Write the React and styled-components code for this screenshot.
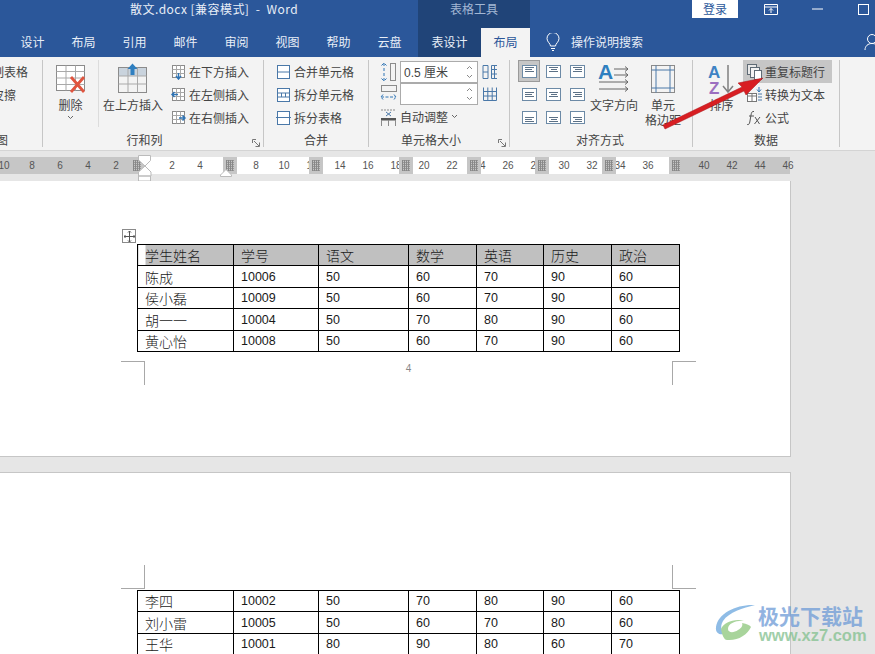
import React from 'react';
import styled, { createGlobalStyle } from 'styled-components';

const GlobalStyle = createGlobalStyle`
  html, body {
    margin: 0;
    padding: 0;
    background: #e6e6e6;
  }
  body {
    font-family: "Noto Sans CJK SC", "Liberation Sans", sans-serif;
    font-size: 12px;
    color: #444;
  }
`;

const Window = styled.div`
  position: relative;
  width: 875px;
  height: 654px;
  overflow: hidden;
  background: #e6e6e6;
`;

/* title bar */
const TitleBar = styled.div`
  display: flex;
  height: 28px;
  background: #2b579a;
  color: #e8eef7;
  & > * {
    flex-shrink: 0;
  }
`;

const DocTitle = styled.div`
  width: 418px;
  box-sizing: border-box;
  padding-left: 130px;
  line-height: 18px;
  font-size: 12px;
  letter-spacing: 0.45px;
  white-space: pre;
`;

const ContextTitle = styled.div`
  width: 112px;
  margin-right: 162px;
  background: #204478;
  color: #a3b7d4;
  text-align: center;
  line-height: 18px;
`;

const LoginButton = styled.div`
  width: 46px;
  height: 18px;
  background: #fff;
  color: #2b579a;
  text-align: center;
  line-height: 17px;
`;

const WindowControl = styled.div`
  width: 46px;
  height: 18px;
  display: flex;
  align-items: center;
  justify-content: center;
  margin-left: ${(p) => p.$gap || 0}px;
`;

/* tabs */
const TabBar = styled.div`
  display: flex;
  height: 29px;
  padding-left: 7px;
  background: #2b579a;
  & > * {
    flex-shrink: 0;
  }
`;

const Tab = styled.div`
  width: ${(p) => p.$w || 51}px;
  line-height: 27px;
  text-align: center;
  color: ${(p) => (p.$active ? '#2b579a' : '#e8eef7')};
  background: ${(p) => (p.$active ? '#f3f3f3' : p.$context ? '#204478' : 'transparent')};
`;

const TabGap = styled.div`
  width: 3px;
`;

const SearchHint = styled.div`
  display: flex;
  align-items: center;
  gap: 11px;
  height: 27px;
  margin-left: 16px;
  color: #e8eef7;
  white-space: nowrap;
`;

const UserIcon = styled.div`
  margin-left: 221px;
  padding-top: 5px;
`;

/* ribbon */
const Ribbon = styled.div`
  display: flex;
  height: 94px;
  padding-top: 3px;
  box-sizing: border-box;
  background: #f3f3f3;
  border-bottom: 1px solid #d4d4d4;
`;

const Group = styled.div`
  position: relative;
  width: ${(p) => p.$w}px;
  height: 87px;
  box-sizing: border-box;
  border-right: 1px solid #c6c6c6;
  display: flex;
  flex-direction: column;
  overflow: hidden;
`;

const GroupBody = styled.div`
  display: flex;
  height: 71px;
  padding-left: ${(p) => p.$pad || 0}px;
`;

const GroupLabel = styled.div`
  height: 16px;
  text-align: center;
  line-height: 18px;
  color: #444;
  margin-left: ${(p) => p.$shift || 0}px;
  white-space: nowrap;
`;

const Launcher = styled.div`
  position: absolute;
  right: 3px;
  bottom: 0;
  width: 8px;
  height: 8px;
  line-height: 0;
`;

const ClippedGroupBody = styled.div`
  height: 71px;
  display: flex;
  flex-direction: column;
  align-items: flex-end;
`;

const ClippedRow = styled.div`
  height: 23px;
  line-height: 23px;
  white-space: nowrap;
  margin-right: ${(p) => p.$right}px;
`;

const ClippedLabel = styled.div`
  height: 16px;
  line-height: 18px;
  display: flex;
  justify-content: flex-end;
  margin-right: 34px;
  white-space: nowrap;
`;

const BigButton = styled.div`
  width: ${(p) => p.$w}px;
  margin-left: ${(p) => p.$ml || 0}px;
  display: flex;
  flex-direction: column;
  align-items: center;
  padding-top: 2px;
  line-height: 15px;
  text-align: center;
  flex-shrink: 0;
  border-right: ${(p) => (p.$divided ? '1px solid #dcdcdc' : 'none')};
  height: ${(p) => (p.$divided ? '67px' : 'auto')};
  box-sizing: border-box;
`;

const BigIcon = styled.div`
  height: 34px;
  flex-shrink: 0;
  display: flex;
  align-items: center;
  margin-bottom: 1px;
`;

const Chevron = styled.div`
  height: 12px;
  margin-top: 3px;
  line-height: 0;
`;

const SmallColumn = styled.div`
  margin-left: ${(p) => p.$ml || 0}px;
  display: flex;
  flex-direction: column;
`;

const SmallRow = styled.div`
  display: flex;
  align-items: center;
  gap: 3px;
  height: 23px;
  padding: 0 7px 0 ${(p) => p.$pad || 0}px;
  white-space: nowrap;
  background: ${(p) => (p.$hot ? '#c6c6c6' : 'transparent')};
`;

const SizeColumn = styled.div`
  display: flex;
  flex-direction: column;
`;

const SizeRow = styled.div`
  display: flex;
  align-items: center;
  height: ${(p) => p.$h || 23}px;
  gap: 3px;
`;

const SpinInput = styled.div`
  width: 78px;
  height: 22px;
  box-sizing: border-box;
  border: 1px solid #ababab;
  background: #fff;
  display: flex;
  align-items: center;
  justify-content: space-between;
  padding: 0 3px 0 3px;
  margin-right: 1px;
  font-family: "Liberation Sans", "Noto Sans CJK SC", sans-serif;
  font-size: 12px;
`;

const AlignGrid = styled.div`
  display: grid;
  grid-template-columns: repeat(3, 22px);
  grid-auto-rows: 23px;
  column-gap: 2px;
  margin-left: 8px;
`;

const AlignCell = styled.div`
  display: flex;
  align-items: center;
  justify-content: center;
  height: ${(p) => (p.$on ? '22px' : '23px')};
  box-sizing: border-box;
  background: ${(p) => (p.$on ? '#c6c6c6' : 'transparent')};
  border: ${(p) => (p.$on ? '1px solid #9a9a9a' : 'none')};
`;

/* ruler */
const RulerBand = styled.div`
  position: relative;
  height: 30px;
  background: #e6e6e6;
`;

const RulerTrack = styled.div`
  position: absolute;
  top: 6px;
  left: 0;
  width: 790px;
  height: 17px;
  background: linear-gradient(
    90deg,
    #c6c6c6 145px,
    #fff 145px,
    #fff 670px,
    #c6c6c6 670px
  );
  display: flex;
`;

const RulerCell = styled.div`
  flex: 0 0 28px;
  text-align: center;
  font-family: "Liberation Sans", sans-serif;
  font-size: 10px;
  line-height: 17px;
  color: #555;
  &:first-child {
    margin-left: -10px;
  }
`;

const ColumnMarker = styled.div`
  position: absolute;
  top: 6px;
  left: ${(p) => p.$x - 7}px;
  width: 14px;
  height: 17px;
  padding: 3px 3px;
  box-sizing: border-box;
  background: #c6c6c6;
  &::after {
    content: '';
    display: block;
    height: 100%;
    background:
      repeating-linear-gradient(90deg, #888 0 1px, transparent 1px 2px),
      repeating-linear-gradient(0deg, #999 0 1px, #c6c6c6 1px 2px);
  }
`;

const RulerHandle = styled.svg`
  position: absolute;
  top: 4px;
  left: 138px;
`;

const HangingHandle = styled.svg`
  position: absolute;
  top: 18px;
  left: 220px;
`;

/* pages */
const DocArea = styled.div`
  width: 791px;
`;

const Page = styled.div`
  position: relative;
  height: ${(p) => p.$h}px;
  box-sizing: border-box;
  background: #fff;
  padding-top: ${(p) => p.$top}px;
  border-right: 1px solid #c6c6c6;
  border-top: ${(p) => (p.$second ? '1px solid #c6c6c6' : 'none')};
  border-bottom: ${(p) => (p.$second ? 'none' : '1px solid #c6c6c6')};
`;

const PageGap = styled.div`
  height: 15px;
  background: #e6e6e6;
`;

const MoveHandle = styled.div`
  width: 14px;
  height: 14px;
  margin: 0 0 1px 122px;
  box-sizing: border-box;
  border: 1px solid #8a8a8a;
  background: #fff;
  display: flex;
  align-items: center;
  justify-content: center;
`;

const WordTable = styled.table`
  margin-left: 137px;
  margin-top: ${(p) => p.$mt || 0}px;
  border-collapse: collapse;
  table-layout: fixed;
  width: 542px;
  color: #000;
`;

const TableRow = styled.tr`
  height: 21px;
  &:nth-child(even) {
    height: 22px;
  }
`;

const Cell = styled.td`
  padding: 0 0 0 7px;
  border: 1px solid #000;
  box-sizing: border-box;
  overflow: hidden;
  white-space: nowrap;
  vertical-align: middle;
  font-family: ${(p) =>
    p.$cjk ? '"Noto Sans CJK SC", sans-serif' : '"Liberation Sans", sans-serif'};
  font-size: ${(p) => (p.$cjk ? 14 : 12.5)}px;
  line-height: 20px;
  font-weight: 300;
  color: #1a1a1a;
  background: ${(p) =>
    p.$inset
      ? 'linear-gradient(90deg, #fff 7px, #c0c0c0 7px)'
      : p.$head
        ? '#c0c0c0'
        : '#fff'};
`;

const CropRow = styled.div`
  display: flex;
  justify-content: space-between;
  width: 575px;
  margin-left: 121px;
  margin-top: ${(p) => p.$mt || 0}px;
`;

const CropMark = styled.div`
  width: 24px;
  height: 24px;
  box-sizing: border-box;
  ${(p) => (p.$top ? 'border-bottom' : 'border-top')}: 1px solid #a8a8a8;
  ${(p) => (p.$side === 'left' ? 'border-right' : 'border-left')}: 1px solid #a8a8a8;
`;

const PageNumber = styled.div`
  font-family: "Liberation Sans", sans-serif;
  font-size: 10px;
  line-height: 16px;
  color: #888;
  align-self: flex-start;
`;

/* overlays */
const ArrowOverlay = styled.svg`
  position: absolute;
  left: 0;
  top: 0;
  pointer-events: none;
`;

const Watermark = styled.div`
  position: absolute;
  left: 715px;
  top: 603px;
  display: flex;
  gap: 1px;
  opacity: 0.75;
`;

const WatermarkText = styled.div`
  display: flex;
  flex-direction: column;
`;

const WatermarkName = styled.div`
  font-size: 21px;
  line-height: 24px;
  font-weight: 700;
  color: #6d9ad6;
  white-space: nowrap;
`;

const WatermarkUrl = styled.div`
  font-family: "Liberation Sans", sans-serif;
  font-size: 16.5px;
  line-height: 17px;
  font-weight: 700;
  color: #82c08e;
  margin-left: 1px;
`;

/* icon drawings */
const BLUE = '#4a78a8';

const TableGlyph = ({ kind }) => (
  <svg width="15" height="16" viewBox="0 0 15 16" fill="none" stroke={BLUE}>
    <rect x="1.5" y="1.5" width="12" height="13" fill="#fff" />
    {kind === 'merge' && <path d="M1.5 8h12" />}
    {kind === 'split' && <path d="M1.5 6h12M1.5 10h12M5.5 6v4M9.5 6v4" />}
    {kind === 'table' && <path d="M0 7.500h15" />}
  </svg>
);

const InsertGlyph = ({ dir }) => (
  <svg width="15" height="16" viewBox="0 0 15 16" fill="none">
    <rect x="1.5" y="1.5" width="12" height="12" fill="#fff" stroke="#8b8b8b" />
    <path d="M5.5 1.5v12M9.5 1.5v12M1.5 5.5h12M1.5 9.5h12" stroke="#a8a8a8" />
    {dir === 'down' && <path d="M7.5 9v5.5M5 12l2.5 3L10 12" stroke="#2f74b5" strokeWidth="1.5" />}
    {dir === 'left' && <path d="M1 7.5h6M3.5 5L1 7.5 3.5 10" stroke="#2f74b5" strokeWidth="1.5" />}
    {dir === 'right' && <path d="M8 8h6M11.5 5.5L14 8l-2.5 2.5" stroke="#2f74b5" strokeWidth="1.5" />}
  </svg>
);

const AlignGlyph = ({ h, v }) => {
  const ys = v === 0 ? [2.5, 4.5, 6.5] : v === 1 ? [4.5, 6.5, 8.5] : [6.5, 8.5, 10.5];
  const spans = [
    [3, 12],
    h === 0 ? [3, 10] : h === 1 ? [5, 11] : [5, 12],
    [3, 12],
  ];
  return (
    <svg width="15" height="13" viewBox="0 0 15 13" fill="none">
      <rect x="0.5" y="0.5" width="14" height="12" fill="#fff" stroke="#6c8aa6" />
      {ys.map((y, i) => (
        <path key={y} d={`M${spans[i][0]} ${y}H${spans[i][1]}`} stroke="#5c7186" />
      ))}
    </svg>
  );
};

const Corner = () => (
  <svg width="8" height="8" viewBox="0 0 8 8" fill="none" stroke="#777">
    <path d="M0.5 4V0.5H4M2 2l5 5M3.5 7.5h4v-4" />
  </svg>
);

const ChevronDown = () => (
  <svg width="7" height="5" viewBox="0 0 7 5" fill="none" stroke="#666">
    <path d="M1 1l2.5 2.5L6 1" />
  </svg>
);

const SpinArrows = () => (
  <svg width="9" height="18" viewBox="0 0 9 18" fill="none" stroke="#888">
    <path d="M2 6l2.500-2.500L7 6M2 12l2.500 2.500L7 12" />
  </svg>
);

const tabs = ['设计', '布局', '引用', '邮件', '审阅', '视图', '帮助', '云盘'];
const headRow = ['学生姓名', '学号', '语文', '数学', '英语', '历史', '政治'];
const firstTable = [
  ['陈成', '10006', '50', '60', '70', '90', '60'],
  ['侯小磊', '10009', '50', '60', '70', '90', '60'],
  ['胡一一', '10004', '50', '70', '80', '90', '60'],
  ['黄心怡', '10008', '50', '60', '70', '90', '60'],
];
const secondTable = [
  ['李四', '10002', '50', '70', '80', '90', '60'],
  ['刘小雷', '10005', '50', '60', '70', '80', '60'],
  ['王华', '10001', '80', '90', '80', '60', '70'],
];
const colWidths = [96, 85, 90, 68, 67, 68, 68];
const markers = [137, 230, 316, 406, 474, 542, 609, 676];
const rulerValues = Array.from({ length: 29 }, (_, k) => Math.abs(10 - 2 * k));

const DataTable = ({ rows, head, mt }) => (
  <WordTable $mt={mt}>
    <colgroup>
      {colWidths.map((w, i) => (
        <col key={i} style={{ width: w }} />
      ))}
    </colgroup>
    <tbody>
      {head && (
        <TableRow>
          {head.map((t, i) => (
            <Cell key={t} $cjk $head $inset={i === 0}>{t}</Cell>
          ))}
        </TableRow>
      )}
      {rows.map((row) => (
        <TableRow key={row[0]}>
          {row.map((t, i) => (
            <Cell key={i} $cjk={i === 0}>{t}</Cell>
          ))}
        </TableRow>
      ))}
    </tbody>
  </WordTable>
);

const App = () => (
  <Window>
    <GlobalStyle />
    <TitleBar>
      <DocTitle>散文.docx [兼容模式]  -  Word</DocTitle>
      <ContextTitle>表格工具</ContextTitle>
      <LoginButton>登录</LoginButton>
      <WindowControl $gap={10}>
        <svg width="14" height="11" viewBox="0 0 14 11" fill="none" stroke="#fff">
          <path d="M0.5 0.5h13v10h-13zM0.5 3h13M7 9V4.5M5 6.5l2-2 2 2" />
        </svg>
      </WindowControl>
      <WindowControl>
        <svg width="11" height="2" viewBox="0 0 11 2"><path d="M0 1h11" stroke="#fff" /></svg>
      </WindowControl>
      <WindowControl>
        <svg width="11" height="11" viewBox="0 0 11 11" fill="none"><rect x="0.5" y="0.5" width="10" height="10" stroke="#fff" /></svg>
      </WindowControl>
    </TitleBar>

    <TabBar>
      {tabs.map((t) => (
        <Tab key={t}>{t}</Tab>
      ))}
      <TabGap />
      <Tab $w={63} $context>表设计</Tab>
      <Tab $w={49} $active>布局</Tab>
      <SearchHint>
        <svg width="14" height="18" viewBox="0 0 14 18" fill="none" stroke="#fff">
          <path d="M4.5 13c0-2.5-3.5-4-3.5-7.5a6 6 0 0 1 12 0C13 9 9.5 10.500 9.500 13zM5 15.500h4M6 17.500h2" />
        </svg>
        操作说明搜索
      </SearchHint>
      <UserIcon>
        <svg width="16" height="18" viewBox="0 0 16 18" fill="none" stroke="#fff">
          <circle cx="8" cy="6" r="4.500" />
          <path d="M1 17c0-4 3-6.500 7-6.500s7 2.500 7 6.500" />
        </svg>
      </UserIcon>
    </TabBar>

    <Ribbon>
      <Group $w={43}>
        <ClippedGroupBody>
          <ClippedRow $right={14}>绘制表格</ClippedRow>
          <ClippedRow $right={26}>橡皮擦</ClippedRow>
        </ClippedGroupBody>
        <ClippedLabel>绘图</ClippedLabel>
      </Group>

      <Group $w={221}>
        <GroupBody>
          <BigButton $w={56} $divided>
            <BigIcon>
              <svg width="32" height="30" viewBox="0 0 32 30" fill="none">
                <rect x="1.500" y="1.500" width="28" height="25" fill="#fff" stroke="#8b8b8b" />
                <path d="M11 1.500v25M20.500 1.500v25M1.500 7.500h28M1.500 14h28M1.500 20.500h28" stroke="#a9a9a9" />
                <path d="M16 13l13 15M29 13L16 28" stroke="#e0553f" strokeWidth="2.800" />
              </svg>
            </BigIcon>
            删除
            <Chevron><ChevronDown /></Chevron>
          </BigButton>
          <BigButton $w={60} $ml={4}>
            <BigIcon>
              <svg width="30" height="32" viewBox="0 0 30 32" fill="none">
                <rect x="1" y="5" width="28" height="8" fill="#c9d3dd" />
                <rect x="0.500" y="4.500" width="28" height="25" stroke="#8b8b8b" />
                <path d="M10 4.500v25M19.500 4.500v25M0.500 13h28M0.500 21h28" stroke="#a9a9a9" />
                <path d="M14.500 0.500L9.500 6h3v6h4V6h3z" fill="#2f7fc0" />
              </svg>
            </BigIcon>
            在上方插入
          </BigButton>
          <SmallColumn $ml={8}>
            <SmallRow><InsertGlyph dir="down" />在下方插入</SmallRow>
            <SmallRow><InsertGlyph dir="left" />在左侧插入</SmallRow>
            <SmallRow><InsertGlyph dir="right" />在右侧插入</SmallRow>
          </SmallColumn>
        </GroupBody>
        <GroupLabel $shift={-17}>行和列</GroupLabel>
        <Launcher><Corner /></Launcher>
      </Group>

      <Group $w={105}>
        <GroupBody $pad={12}>
          <SmallColumn>
            <SmallRow><TableGlyph kind="merge" />合并单元格</SmallRow>
            <SmallRow><TableGlyph kind="split" />拆分单元格</SmallRow>
            <SmallRow><TableGlyph kind="table" />拆分表格</SmallRow>
          </SmallColumn>
        </GroupBody>
        <GroupLabel>合并</GroupLabel>
      </Group>

      <Group $w={141}>
        <GroupBody $pad={11}>
          <SizeColumn>
            <SizeRow>
              <svg width="17" height="20" viewBox="0 0 17 20" fill="none">
                <rect x="10.500" y="1.500" width="5" height="17" stroke="#8b8b8b" />
                <path d="M4 1v18M1.500 3.500L4 1l2.500 2.500M1.500 16.500L4 19l2.500-2.500" stroke="#2f74b5" strokeDasharray="3 2" />
              </svg>
              <SpinInput>0.5 厘米<SpinArrows /></SpinInput>
              <svg width="16" height="16" viewBox="0 0 16 16" fill="none" stroke={BLUE}>
                <path d="M1 1.500h5v13H1zM1 8h5M15 1.500H9.500v13H15M9.500 5.500H15M9.500 10H15M12.500 1.500v13" />
              </svg>
            </SizeRow>
            <SizeRow $h={22}>
              <svg width="17" height="20" viewBox="0 0 17 20" fill="none">
                <rect x="1.500" y="1.500" width="15" height="6" stroke="#8b8b8b" />
                <path d="M1 13h15M3 10.500L1 13l2 2.500M14 10.500l2 2.500-2 2.500" stroke="#2f74b5" strokeDasharray="3 1.500" />
              </svg>
              <SpinInput><span /><SpinArrows /></SpinInput>
              <svg width="16" height="16" viewBox="0 0 16 16" fill="none" stroke={BLUE}>
                <path d="M1.500 1.500v13h13v-13M1.500 5.500h13M1.500 10h13M5.800 1.500v13M10.200 1.500v13" />
              </svg>
            </SizeRow>
            <SizeRow>
              <svg width="17" height="18" viewBox="0 0 17 18" fill="none">
                <path d="M1 2h15" stroke="#8b8b8b" strokeDasharray="2 1" />
                <path d="M6 4l5 4M11 4L6 8" stroke={BLUE} />
                <rect x="1" y="10" width="15" height="2.500" fill="#555" />
                <path d="M1.500 12v6M8.500 12v6M15.500 12v6" stroke="#8b8b8b" />
              </svg>
              自动调整 <ChevronDown />
            </SizeRow>
          </SizeColumn>
        </GroupBody>
        <GroupLabel $shift={-16}>单元格大小</GroupLabel>
        <Launcher><Corner /></Launcher>
      </Group>

      <Group $w={183}>
        <GroupBody>
          <AlignGrid>
            {[0, 1, 2].map((v) =>
              [0, 1, 2].map((h) => (
                <AlignCell key={`${v}${h}`} $on={v === 0 && h === 0}>
                  <AlignGlyph h={h} v={v} />
                </AlignCell>
              ))
            )}
          </AlignGrid>
          <BigButton $w={52}>
            <BigIcon>
              <svg width="32" height="32" viewBox="0 0 32 32" fill="none">
                <text x="0" y="16" fontFamily="Liberation Sans" fontSize="21" fontWeight="700" fill="#2f7fc0">A</text>
                <path d="M16 6h14M27 3.500L30 6l-3 2.500M16 12h14M27 9.500l3 2.500-3 2.500M1 19h29M27 16.500l3 2.500-3 2.500M1 26h29M27 23.500l3 2.500-3 2.500" stroke="#666" />
              </svg>
            </BigIcon>
            文字方向
          </BigButton>
          <BigButton $w={46}>
            <BigIcon>
              <svg width="24" height="30" viewBox="0 0 24 30" fill="none">
                <rect x="0.500" y="1.500" width="23" height="27" stroke="#8b8b8b" />
                <path d="M5 1.500v27M19 1.500v27" stroke={BLUE} />
                <path d="M0.500 6h23M0.500 24h23" stroke={BLUE} />
              </svg>
            </BigIcon>
            单元<br />格边距
          </BigButton>
        </GroupBody>
        <GroupLabel $shift={-2}>对齐方式</GroupLabel>
      </Group>

      <Group $w={147}>
        <GroupBody $pad={7}>
          <BigButton $w={43}>
            <BigIcon>
              <svg width="28" height="32" viewBox="0 0 28 32" fill="none">
                <text x="0" y="15" fontFamily="Liberation Sans" fontSize="17" fontWeight="700" fill="#3f83c4">A</text>
                <text x="1" y="31" fontFamily="Liberation Sans" fontSize="17" fontWeight="700" fill="#9c6fc0">Z</text>
                <path d="M20 2v26M15 23l5 6 5-6" stroke="#808080" strokeWidth="1.500" />
              </svg>
            </BigIcon>
            排序
          </BigButton>
          <SmallColumn>
            <SmallRow $pad={4} $hot>
              <svg width="15" height="16" viewBox="0 0 15 16" fill="none" stroke="#5f6b75">
                <rect x="0.500" y="0.500" width="9" height="10" fill="#e8e8e8" />
                <rect x="3.500" y="3.500" width="9" height="10" fill="#f3f3f3" />
                <rect x="7.500" y="6.500" width="7" height="9" fill="#fff" />
              </svg>
              重复标题行
            </SmallRow>
            <SmallRow $pad={4}>
              <svg width="15" height="16" viewBox="0 0 15 16" fill="none">
                <rect x="0.500" y="6.500" width="9" height="8" fill="#fff" stroke="#777" />
                <path d="M0.500 9h9M5 6.500v8" stroke="#777" />
                <path d="M11 7h4M11 10h4M11 13h4" stroke={BLUE} />
                <path d="M12 0v4M10 2.500L12 5l2-2.500" stroke="#2f74b5" />
              </svg>
              转换为文本
            </SmallRow>
            <SmallRow $pad={4}>
              <svg width="15" height="16" viewBox="0 0 15 16" fill="none" stroke="#555">
                <path d="M7 1.500C5 1 4.500 2.500 4 5L2.800 12c-.3 2-1.300 3-2.600 2.500M2 6h5M8 7l4.500 7M13 7L7.500 14" />
              </svg>
              公式
            </SmallRow>
          </SmallColumn>
        </GroupBody>
        <GroupLabel $shift={0}>数据</GroupLabel>
      </Group>
    </Ribbon>

    <RulerBand>
      <RulerTrack>
        {rulerValues.map((v, k) => (
          <RulerCell key={k}>{v === 0 ? '' : v}</RulerCell>
        ))}
      </RulerTrack>
      {markers.map((x) => (
        <ColumnMarker key={x} $x={x} />
      ))}
      <RulerHandle width="14" height="26" viewBox="0 0 14 26" fill="#fff" stroke="#bbb">
        <path d="M0.500 0.500h12v5L7 11 0.500 5zM7 11l6 6v4H0.500v-4zM0.500 21h12v5H0.500z" />
      </RulerHandle>
      <HangingHandle width="12" height="8" viewBox="0 0 12 8" fill="#fff" stroke="#bbb">
        <path d="M6 0.500L11.500 6v1.500H0.500V6z" />
      </HangingHandle>
    </RulerBand>

    <DocArea>
      <Page $h={276} $top={48}>
        <MoveHandle>
          <svg width="11" height="11" viewBox="0 0 11 11" fill="none" stroke="#555">
            <path d="M5.500 0v11M0 5.500h11M4 1.500L5.500 0 7 1.500M4 9.500L5.500 11 7 9.500M1.500 4L0 5.500 1.500 7M9.500 4L11 5.500 9.500 7" />
          </svg>
        </MoveHandle>
        <DataTable rows={firstTable} head={headRow} />
        <CropRow $mt={9}>
          <CropMark $side="left" />
          <PageNumber>4</PageNumber>
          <CropMark $side="right" />
        </CropRow>
      </Page>
      <PageGap />
      <Page $h={182} $top={92} $second>
        <CropRow>
          <CropMark $side="left" $top />
          <CropMark $side="right" $top />
        </CropRow>
        <DataTable rows={secondTable} mt={1} />
      </Page>
    </DocArea>

    <ArrowOverlay width="875" height="654" viewBox="0 0 875 654">
      <polygon points="663,125 742,87 738,83 763,78 746,95 744,91 665,129" fill="#d81e22" stroke="#a81418" strokeWidth="0.500" />
    </ArrowOverlay>

    <Watermark>
      <svg width="42" height="40" viewBox="0 0 42 40" fill="none">
        <path d="M40 2C22 1 3 10 1 24c-1 7 5 9 12 6C7 30 4 25 8 18 14 9 28 5 40 2z" fill="#6aa6de" />
        <path d="M6 26c3-7 14-11 24-8-8-1-17 2-17 8 0 4 6 4 10 1 4-2 5-5 4-7 5 1 8 2 9 4-4 8-13 14-24 13-3 0-5-5-6-11z" fill="#8cc67a" />
      </svg>
      <WatermarkText>
        <WatermarkName>极光下载站</WatermarkName>
        <WatermarkUrl>www.xz7.com</WatermarkUrl>
      </WatermarkText>
    </Watermark>
  </Window>
);

export default App;
